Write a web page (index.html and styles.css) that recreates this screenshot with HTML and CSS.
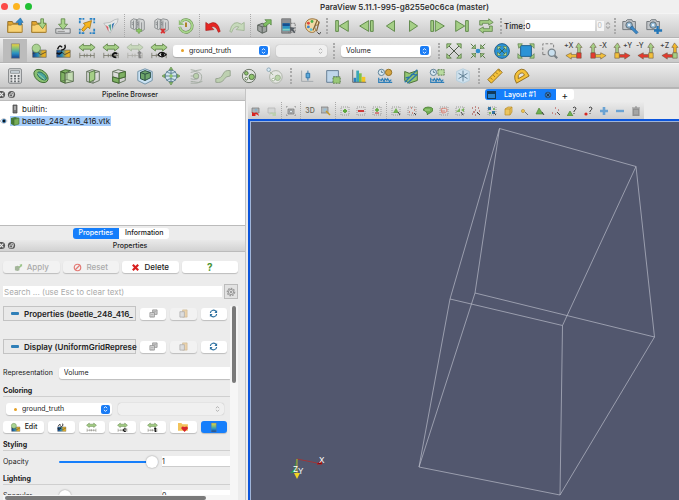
FILE: index.html
```html
<!DOCTYPE html>
<html lang="en">
<head>
<meta charset="utf-8">
<title>ParaView 5.11.1-995-g8255e0c6ca (master)</title>
<link rel="stylesheet" href="styles.css">
</head>
<body>
<svg class="sprite" aria-hidden="true">
  <defs>
    <linearGradient id="cmap" x1="0" y1="0" x2="0" y2="1"><stop offset="0" stop-color="#f0d23c"/><stop offset=".35" stop-color="#7fbf7b"/><stop offset=".65" stop-color="#2b93c4"/><stop offset="1" stop-color="#173f8f"/></linearGradient>
    <linearGradient id="cmaph" x1="0" y1="0" x2="1" y2="0"><stop offset="0" stop-color="#123f8c"/><stop offset=".4" stop-color="#2a8fb8"/><stop offset=".7" stop-color="#d9a92c"/><stop offset="1" stop-color="#f5b81d"/></linearGradient>
  </defs>
  <symbol id="folder" viewBox="0 0 20 20"><path d="M2 17V5h5l1 2h9v10z" fill="#e3a62e" stroke="#8a6a2a"/><path d="M2 17V9h4l1-1h11v9z" fill="#f8d273" stroke="#a37a2c"/></symbol>
  <symbol id="open" viewBox="0 0 20 20"><use href="#folder"/><path d="M14 9V6h-3l5-5 3 5h-2v3z" fill="#2f8ccc" stroke="#1c5d92" stroke-width=".6"/></symbol>
  <symbol id="recent" viewBox="0 0 20 20"><use href="#folder"/><path d="M12 2h3v5h3l-4 6-5-6h3z" fill="#a9d48a" stroke="#557d3d" stroke-width=".8"/></symbol>
  <symbol id="save" viewBox="0 0 20 20"><path d="M2 13h16v5H2z" fill="#d9dadb" stroke="#6d7173"/><path d="M8 2h4v6h3l-5 6-5-6h3z" fill="#a9d48a" stroke="#557d3d" stroke-width=".8"/><path d="M4 16h8" stroke="#888"/></symbol>
  <symbol id="catalyst" viewBox="0 0 20 20"><path d="M2 7V2h5M13 2h5v5M18 13v5h-5M7 18H2v-5" fill="none" stroke="#2c83c4" stroke-width="2" stroke-dasharray="3 1"/><path d="M4 14l4-5-2-2 9-3-2 9-2-2-5 5z" fill="#f6b51e" stroke="#9c6b12" stroke-width=".8"/></symbol>
  <symbol id="extract" viewBox="0 0 20 20"><path d="M2 7q8 0 12-4l4-1-1 4q-5 5-8 12q-3-6-7-11z" fill="#e5e7e7" stroke="#a6aaac" stroke-width=".7"/><path d="M4 9l3 2v5z" fill="#db5960"/><path d="M7 9l3-1v8z" fill="#59a58d"/><path d="M11 8l3-2-3 8z" fill="#3b78b0"/></symbol>
  <symbol id="server" viewBox="0 0 20 20"><path d="M2 4l3-2 4 1v9l-3 2-4-2zM8 4l3-2 5 1 1 2v9l-3 2-6-2z" fill="#d4d6d6" stroke="#74787a" stroke-width=".8"/><path d="M5 4v9M11 4v11M14 6v9M3 6l2 1M3 8l2 1M9 6l2 1M9 8l2 1" stroke="#74787a" stroke-width=".8"/></symbol>
  <symbol id="connect" viewBox="0 0 20 20"><use href="#server"/><path d="M8 14h2v-1h2v1h2v2h-2v2h-2v-2H8z" fill="#8ecb67" stroke="#618b48" stroke-width=".5"/></symbol>
  <symbol id="disconnect" viewBox="0 0 20 20"><use href="#server"/><path d="M9 13l4 5M13 13l-4 5" stroke="#d92d2d" stroke-width="2"/></symbol>
  <symbol id="history" viewBox="0 0 20 20"><path d="M5 5a7 7 0 1 1-2 6" fill="none" stroke="#668d4e" stroke-width="3"/><path d="M5 5a7 7 0 1 1-2 6" fill="none" stroke="#a8d58c" stroke-width="2"/><path d="M2 3v6h6z" fill="#91bf74"/><path d="M10 6v5" stroke="#ab7b14" stroke-width="2"/></symbol>
  <symbol id="undo" viewBox="0 0 20 20"><path d="M2 6l3 2q10-6 13 8l-2 1q-3-8-8-6l3 3-9 1z" fill="#e52522" stroke="#a41b19" stroke-width=".7"/></symbol>
  <symbol id="redo" viewBox="0 0 20 20"><path d="M18 6l-3 2Q5 2 2 16l2 1q3-8 8-6l-3 3 9 1z" fill="#c6d9bb" stroke="#96ad88" stroke-width=".8"/></symbol>
  <symbol id="cube-out" viewBox="0 0 20 20"><path d="M3 9l5-2 5 2v7l-5 2-5-3z" fill="#9fa3a1" stroke="#555c56"/><path d="M8 11v7M3 9l5 2 5-2" stroke="#555c56" fill="none"/><path d="M9 8l4-3-2-2h7v6l-2-2-5 4z" fill="#7fbf62" stroke="#477734" stroke-width=".7"/></symbol>
  <symbol id="select-color" viewBox="0 0 20 20"><path d="M3 2h10v16H3z" fill="#8d9094" stroke="#777"/><path d="M4 7h8v8H4z" fill="#2b93c4"/><path d="M4 7h8v3H4z" fill="#174f8f"/><path d="M4 13h8v2H4z" fill="#7fd0c0"/><path d="M13 7h5v10H9" fill="none" stroke="#777" stroke-dasharray="2 1"/><path d="M12 11l6 1-2 2 2 3-1 1-3-3-1 2z" fill="#555b61"/></symbol>
  <symbol id="palette" viewBox="0 0 20 20"><path d="M10 2c8 0 9 6 6 7-4 0-3 3-2 5 0 4-6 4-9 1C0 10 3 2 10 2z" fill="#f1d9a5" stroke="#92672c"/><circle cx="6" cy="7" r="1.6" fill="#e0463c"/><circle cx="10" cy="5" r="1.6" fill="#4cae4c"/><circle cx="6" cy="11" r="1.6" fill="#3a84ce"/><circle cx="9" cy="14" r="1.5" fill="#5ac0dd"/><path d="M16 3l-5 12M18 5l-3 11" stroke="#806238" stroke-width="1.3"/><path d="M16 17l2 2 2-2" fill="none" stroke="#222"/></symbol>
  <symbol id="first" viewBox="0 0 20 20"><path d="M3 4h3v12H3zM17 4v12L7 10z" class="vcr"/></symbol>
  <symbol id="prev" viewBox="0 0 20 20"><path d="M13 4v12L3 10zM15 4h3v12h-3z" class="vcr"/></symbol>
  <symbol id="reverse" viewBox="0 0 20 20"><path d="M15 4v12L6 10z" class="vcr"/></symbol>
  <symbol id="play" viewBox="0 0 20 20"><path d="M5 4v12l9-6z" class="vcr"/></symbol>
  <symbol id="next" viewBox="0 0 20 20"><path d="M2 4h3v12H2zM7 4v12l10-6z" class="vcr"/></symbol>
  <symbol id="last" viewBox="0 0 20 20"><path d="M14 4h3v12h-3zM3 4v12l10-6z" class="vcr"/></symbol>
  <symbol id="loop" viewBox="0 0 20 20"><path d="M3 9V4h10V2l5 4-5 3V7H6v2zM17 10v6H7v2l-5-4 5-3v2h7v-3z" fill="#a5cf86" stroke="#557a42" stroke-width=".8"/></symbol>
  <symbol id="camera" viewBox="0 0 20 20"><path d="M2 5h3l2-2h5l1 2h3v9H2z" fill="#c2c6ca" stroke="#6c7276"/><circle cx="9" cy="9" r="3.6" fill="#8fb5d2" stroke="#5e666b"/><circle cx="9" cy="9" r="1.4" fill="#e6f2fa"/></symbol>
  <symbol id="cam-edit" viewBox="0 0 20 20"><use href="#camera"/><path d="M11 11l2-1 1 2 5 5-2 2-5-5-2-1z" fill="#3a87c5" stroke="#1f578a" stroke-width=".6"/></symbol>
  <symbol id="cam-add" viewBox="0 0 20 20"><use href="#camera"/><path d="M14 10v9M10 15h9" stroke="#2376b7" stroke-width="2.6"/></symbol>

  <symbol id="legend" viewBox="0 0 20 20"><path d="M6 2h9v16H6z" fill="url(#cmap)" stroke="#777" stroke-width=".7"/></symbol>
  <symbol id="cmap-base" viewBox="0 0 20 20"><path d="M3 9h15v8H3z" fill="url(#cmaph)" stroke="#5b5b5b" stroke-width=".7"/><path d="M3 13l5-2 4 3 6-3" stroke="#333" fill="none" stroke-width=".8"/></symbol>
  <symbol id="edit-map" viewBox="0 0 20 20"><use href="#cmap-base"/><circle cx="7" cy="7" r="4.6" fill="#aad391" stroke="#638750" stroke-width=".8"/></symbol>
  <symbol id="sep-map" viewBox="0 0 20 20"><use href="#cmap-base"/><path d="M4 8q2-6 5-2M8 9q6-1 4-6M3 12q3 3 6-1" fill="none" stroke="#111" stroke-width="1.6"/></symbol>
  <symbol id="range" viewBox="0 0 20 20"><path d="M1 6l5-4v2h8V2l5 4-5 4V8H6v2z" fill="#a5cf86" stroke="#507439" stroke-width=".8"/><path d="M2 12v6M18 12v6M2 15h16M7 13v4M10 13v4M14 13v4" stroke="#77776a" fill="none" stroke-width=".9"/></symbol>
  <symbol id="range-c" viewBox="0 0 20 20"><use href="#range"/><path d="M17 13q-4-2-5 1t4 3" fill="none" stroke="#111" stroke-width="2"/></symbol>
  <symbol id="range-t" viewBox="0 0 20 20"><use href="#range"/><path d="M15 10v7h2M13 12h4" fill="none" stroke="#111" stroke-width="2"/></symbol>
  <symbol id="range-eye" viewBox="0 0 20 20"><use href="#range"/><path d="M9 14q4-5 9 0q-5 5-9 0z" fill="#fff" stroke="#111" stroke-width="1.2"/><circle cx="14" cy="14" r="2" fill="#111"/></symbol>
  <symbol id="reset-cam" viewBox="0 0 20 20"><path d="M4 4l12 12M16 4L4 16" stroke="#3f4b3a"/><path d="M2 2h5L2 7zM18 2v5l-5-5zM2 18v-5l5 5zM18 18h-5l5-5z" fill="#a5cf86" stroke="#50743e" stroke-width=".8"/></symbol>
  <symbol id="zoom-data" viewBox="0 0 20 20"><path d="M2 2l6 6M18 2l-6 6M2 18l6-6M18 18l-6-6" stroke="#50743e"/><path d="M7 7H3l4-4zM13 7V3l4 4zM7 13v4l-4-4zM13 13h4l-4 4z" fill="#a5cf86" stroke="#50743e" stroke-width=".8"/><circle cx="10" cy="10" r="2.600" fill="#2d8ecf"/></symbol>
  <symbol id="reset-closest" viewBox="0 0 20 20"><circle cx="10" cy="10" r="8.200" fill="#2b93d6" stroke="#1b5a87"/><path d="M6 6l8 8M14 6l-8 8" stroke="#33502a" stroke-width=".8"/><path d="M5 5h4L5 9zM15 5v4l-4-4zM5 15v-4l4 4zM15 15h-4l4-4z" fill="#b6dc9a" stroke="#50743e" stroke-width=".6"/></symbol>
  <symbol id="zoom-closest" viewBox="0 0 20 20"><path d="M4 4h12v12H4z" fill="#2b93d6" stroke="#1b5a87"/><path d="M1 2h5L2 7zM19 2v5l-5-5zM1 18v-5l5 5zM19 18h-5l5-5z" fill="#a5cf86" stroke="#50743e" stroke-width=".7"/></symbol>
  <symbol id="zoom-box" viewBox="0 0 20 20"><path d="M2 14V2h12v5M2 14h5" fill="none" stroke="#777" stroke-dasharray="3 2"/><circle cx="12" cy="12" r="4" fill="#c9dfee" stroke="#7b858b" stroke-width="1.4"/><path d="M15 15l3 3" stroke="#777f84" stroke-width="2.4"/></symbol>
  <symbol id="axis-r" viewBox="0 0 20 20"><path d="M14 12V6h-2l3-5 4 5h-2v6z" class="up"/><path d="M13 14H7v-2l-6 3 6 4v-2h6z" class="side"/><path d="M13 12h5v6h-5z" class="hub"/></symbol>
  <symbol id="axis-l" viewBox="0 0 20 20"><path d="M3 12V6H1l4-5 3 5H6v6z" class="up"/><path d="M7 14h6v-2l6 3-6 4v-2H7z" class="side"/><path d="M2 12h5v6H2z" class="hub"/></symbol>

  <symbol id="calc" viewBox="0 0 20 20"><rect x="3" y="2" width="14" height="16" rx="1" fill="#e8e9e9" stroke="#6d7174"/><path d="M5 4h10v3H5z" fill="#c9d3d8" stroke="#6d7174" stroke-width=".7"/><path d="M5 10h10M5 13h10M5 16h10" stroke="#62676a" stroke-width="2" stroke-dasharray="2 2"/></symbol>
  <symbol id="contour" viewBox="0 0 20 20"><ellipse cx="10" cy="10" rx="9" ry="6" transform="rotate(40 10 10)" fill="#8ac072" stroke="#3e6a34"/><ellipse cx="11" cy="10" rx="6" ry="3" transform="rotate(40 11 10)" fill="#4aa7a0" stroke="#2d6a5a"/><path d="M6 7l8 7" stroke="#b0df9d"/></symbol>
  <symbol id="clip" viewBox="0 0 20 20"><path d="M3 5l5 2v11l-5-2zM3 5l5-2 6 1-6 3z" fill="#7fb163" stroke="#3d632e"/><path d="M8 7l9-2v11l-9 2z" fill="#c3dcb2" stroke="#52664a"/><path d="M3 16l7-2 7 2M10 7v7" fill="none" stroke="#52664a" stroke-width=".7"/></symbol>
  <symbol id="slice" viewBox="0 0 20 20"><path d="M3 5l6-2 8 2v10l-7 3-7-2zM3 5l7 2 7-2M10 7v11" fill="none" stroke="#5d6d57"/><path d="M6 6l6-2v10l-6 3z" fill="#a5cf86" stroke="#4d713d"/></symbol>
  <symbol id="threshold" viewBox="0 0 20 20"><path d="M3 5l6-2 8 2v10l-7 3-7-2zM3 5l7 2 7-2M10 7v11M3 11l7 2 7-2" fill="none" stroke="#5d6d57"/><path d="M3 11l7 2v5l-7-2zM10 7l7-2v6l-7 2z" fill="#7fb163" stroke="#3d632e"/></symbol>
  <symbol id="subset" viewBox="0 0 20 20"><path d="M2 5l8-3 8 3v10l-8 4-8-4z" fill="#cbe3f4" stroke="#6b8da4"/><path d="M5 6l5-2 6 2v6l-6 3-5-2z" fill="#6da56a" stroke="#24463e"/><path d="M10 8v7M5 6l5 2 6-2" fill="none" stroke="#24463e"/></symbol>
  <symbol id="glyph" viewBox="0 0 20 20"><circle cx="10" cy="10" r="6.5" fill="#d2e5ef" stroke="#557a8f"/><path d="M10 1v18M1 10h18M5 5q5 4 10 0M5 15q5-4 10 0" fill="none" stroke="#557a8f"/><path d="M8 3h4l-2-3zM8 17h4l-2 3zM3 8v4l-3-2zM17 8v4l3-2z" fill="#8fc56d" stroke="#4f773a" stroke-width=".6"/><circle cx="10" cy="10" r="2" fill="#8fc56d"/></symbol>
  <symbol id="stream" viewBox="0 0 20 20"><path d="M3 3q5 2 12 0M3 6q5-2 9 0t3 7-5 4-7-1M3 10h3M3 13q6 2 9-1M3 18q7 1 13-2" fill="none" stroke="#a2aaa0"/><circle cx="9" cy="10" r="3" fill="#b9d0ab" stroke="#96a293"/></symbol>
  <symbol id="warp" viewBox="0 0 20 20"><path d="M2 13q6 0 8-5t8-4v6q-5 0-7 4t-9 3z" fill="#bdd0b0" stroke="#94a18c"/></symbol>
  <symbol id="group" viewBox="0 0 20 20"><circle cx="10" cy="10" r="7.4" fill="#e2e4e1" stroke="#606a5c"/><circle cx="7" cy="7" r="2" fill="#8fc56d" stroke="#506d41"/><circle cx="13" cy="11" r="3" fill="#8fc56d" stroke="#506d41"/><circle cx="7" cy="13" r="1.5" fill="#fff" stroke="#506d41"/></symbol>
  <symbol id="level" viewBox="0 0 20 20"><circle cx="11" cy="11" r="7" fill="#e5e7e3" stroke="#a8afa4"/><circle cx="13" cy="12" r="3" fill="#b9d4a8" stroke="#9aaf8d"/><circle cx="8" cy="14" r="1.5" fill="#fff" stroke="#9aaf8d"/><circle cx="3" cy="3" r="2" fill="#d8e9f3" stroke="#8ba7b8"/><path d="M4 5l4 4" stroke="#9aaf8d"/></symbol>
  <symbol id="box" viewBox="0 0 20 20"><path d="M4 4v12h13" fill="none" stroke="#a2a6aa"/><path d="M11 4v11" stroke="#2c73a7"/><path d="M9 7h4v5H9z" fill="#5ba9da" stroke="#2c73a7"/></symbol>
  <symbol id="select-block" viewBox="0 0 20 20"><path d="M3 4h13v7h-5v6H3z" fill="#bfd6ea" stroke="#5e7890"/><path d="M10 11h8v7h-8z" fill="#99c878" stroke="#547542" stroke-dasharray="2 1"/></symbol>
  <symbol id="hist" viewBox="0 0 20 20"><path d="M4 17v-5h3v5z" fill="#2b7fc0"/><path d="M7 17V4h3v13z" fill="#3aa7b7"/><path d="M10 17V7h3v10z" fill="#7fc04a"/><path d="M13 17v-6h4v6z" fill="#f4c522"/><path d="M3 3v14h15" fill="none" stroke="#666"/></symbol>
  <symbol id="plot-time" viewBox="0 0 20 20"><circle cx="6" cy="6" r="3.5" fill="#d9e9f2" stroke="#55788e"/><path d="M6 4v2h2" stroke="#55788e" fill="none"/><circle cx="14" cy="6" r="3.5" fill="#d6a541" stroke="#8f6b1e"/><path d="M3 12v5h15M4 14l2 1 1-2 2 3 1-3 2 2 1-2 2 3 2-2" fill="none" stroke="#2f7fb9" stroke-width="1.3"/></symbol>
  <symbol id="plot-line" viewBox="0 0 20 20"><path d="M3 5l5 2 9-3v11l-9 3-5-3z" fill="#94c772" stroke="#42692f"/><path d="M3 17L17 3M4 12l5-1 2-3 6 1M6 18l11-10" stroke="#2a76aa" stroke-width="1.4" fill="none"/></symbol>
  <symbol id="plot-sel" viewBox="0 0 20 20"><circle cx="6" cy="6" r="3.5" fill="#d9e9f2" stroke="#55788e"/><path d="M6 4v2h2" stroke="#55788e" fill="none"/><path d="M11 3h7v6h-7z" fill="#b9dba1" stroke="#547542" stroke-dasharray="2 1"/><path d="M3 12v5h15M4 14l2 1 1-2 2 3 1-3 2 2 1-2 2 3 2-2" fill="none" stroke="#2f7fb9" stroke-width="1.3"/></symbol>
  <symbol id="freeze" viewBox="0 0 20 20"><path d="M3 5l7-3 7 3v10l-7 3-7-3z" fill="#cfe2ef" stroke="#b3cddd"/><path d="M10 4v12M5 7l10 6M15 7L5 13" stroke="#5b7c90"/></symbol>
  <symbol id="ruler" viewBox="0 0 20 20"><path d="M2 14L14 2l4 4L6 18z" fill="#f4c13a" stroke="#8e6a17"/><path d="M5 12l2 2M8 9l2 2M11 6l2 2M14 3l1 2" stroke="#8e6a17"/></symbol>
  <symbol id="protractor" viewBox="0 0 20 20"><path d="M5 18Q0 9 7 4t12 6z" fill="#f4c13a" stroke="#8e6a17"/><path d="M7 13q-1-4 2-6t5 2z" fill="#e5e5e5" stroke="#8e6a17"/></symbol>

  <symbol id="close" viewBox="0 0 10 10"><circle cx="5" cy="5" r="4" fill="#555"/><path d="M3 3l4 4M7 3L3 7" stroke="#eee" stroke-width="1.2"/></symbol>
  <symbol id="float" viewBox="0 0 10 10"><circle cx="5" cy="5" r="4" fill="#555"/><path d="M3 4.500h3v3H3zM4.500 4V3H7v3H6" fill="none" stroke="#eee" stroke-width=".8"/></symbol>
  <symbol id="tab-close" viewBox="0 0 10 10"><circle cx="5" cy="5" r="3.600" fill="#3b78b6" stroke="#234a74"/><path d="M3 3l4 4M7 3L3 7" stroke="#1c3450" stroke-width="1.200"/></symbol>
  <symbol id="chev" viewBox="0 0 8 10"><path d="M2 4l2-2 2 2M2 6l2 2 2-2" fill="none" stroke="currentColor" stroke-width="1.1"/></symbol>
  <symbol id="host" viewBox="0 0 10 10"><path d="M3 1h4v8H3z" fill="#777" stroke="#444" stroke-width=".7"/><path d="M4 3h2M4 5h2" stroke="#ddd"/></symbol>
  <symbol id="eye" viewBox="0 0 10 10"><path d="M0 5q5-6 9 0q-4 6-9 0z" fill="#e9f2f8" stroke="#778"  stroke-width=".5"/><circle cx="5" cy="5" r="2.4" fill="#1f5f93"/><circle cx="5" cy="5" r="1.3" fill="#000"/></symbol>
  <symbol id="gcube" viewBox="0 0 10 10"><path d="M1 2l3 1.500v6L1 8zM1 2l4-1 4 1-5 1.500z" fill="#477a38"/><path d="M4 3.500L9 2v6L4 9.500z" fill="#78ad57" stroke="#3d6a30" stroke-width=".6"/></symbol>
  <symbol id="copy" viewBox="0 0 10 10"><path d="M4 1h5v5H4z" fill="#ccc" stroke="#888" stroke-width=".8"/><path d="M1 4h5v5H1z" fill="#ddd" stroke="#888" stroke-width=".8"/><path d="M2 6h3M5 3h3M2 8h3" stroke="#999" stroke-width=".7"/></symbol>
  <symbol id="paste" viewBox="0 0 10 10"><path d="M4 1h5v8H4z" fill="#ecd3ac" stroke="#cdb894" stroke-width=".7"/><path d="M1 3h5v6H1z" fill="#ddd" stroke="#aaa" stroke-width=".8"/></symbol>
  <symbol id="refresh" viewBox="0 0 10 10"><path d="M1.500 4.500A3.500 3.500 0 0 1 8 3M8.500 5.500A3.500 3.500 0 0 1 2 7" fill="none" stroke="#2b6f9f" stroke-width="1.3"/><path d="M9 1v3.500H6zM1 9V5.500h3z" fill="#2b6f9f"/></symbol>
  <symbol id="gear" viewBox="0 0 10 10"><circle cx="5" cy="5" r="3.600" fill="none" stroke="#999" stroke-width="1.4" stroke-dasharray="1.700 1"/><circle cx="5" cy="5" r="2.600" fill="#ddd" stroke="#999"/><circle cx="5" cy="5" r="1" fill="#888"/></symbol>
  <symbol id="apply" viewBox="0 0 10 10"><path d="M1 4l3-1 2 1v4L4 9 1 8z" fill="#a4b59b"/><path d="M5 4l2-1-1-1 3-1v3L8 4 6 6z" fill="#9cc48b"/></symbol>
  <symbol id="reset" viewBox="0 0 10 10"><circle cx="5" cy="5" r="3.600" fill="none" stroke="#e37873" stroke-width="1.3"/><path d="M7.500 2.500l-5 5" stroke="#e37873" stroke-width="1.3"/></symbol>
  <symbol id="delete" viewBox="0 0 10 10"><path d="M2 2l6 6M8 2L2 8" stroke="#d81f1f" stroke-width="2.400"/></symbol>
  <symbol id="fav" viewBox="0 0 10 10"><path d="M0 8V1h3l1 1h5v6z" fill="#f2c35b"/><path d="M6 9L3 6q0-3 3-1.500Q9 3 9 6z" fill="#d8262b"/></symbol>

  <symbol id="cam-undo" viewBox="0 0 10 10"><path d="M1 2h7v5H1z" fill="#b1b4b6" stroke="#777" stroke-width=".7"/><circle cx="5" cy="4" r="1.500" fill="#8fb0c4"/><path d="M1 6l2 1q4-2 5 3q-3-3-4-1l1 1H1z" fill="#d82420"/></symbol>
  <symbol id="cam-redo" viewBox="0 0 10 10"><path d="M1 2h7v5H1z" fill="#d4d6d6" stroke="#b2b2b2" stroke-width=".7"/><path d="M9 6L7 7Q3 5 2 9q3-2 4 0L5 10h4z" fill="#bcd0ae"/></symbol>
  <symbol id="capture" viewBox="0 0 10 10"><path d="M0 2V0h2M8 0h2v2M10 8v2H8M2 10H0V8" fill="none" stroke="#888" stroke-width=".8"/><path d="M2 3h6v5H2z" fill="#b4b7b9" stroke="#777" stroke-width=".7"/><circle cx="5" cy="5.500" r="1.500" fill="#dfe9ef" stroke="#666" stroke-width=".6"/></symbol>
  <symbol id="adjust" viewBox="0 0 10 10"><path d="M0 1h7v6H0z" fill="#b4b7b9" stroke="#777" stroke-width=".7"/><circle cx="4" cy="4" r="1.800" fill="#9fbfd3"/><path d="M5 5l4 4" stroke="#c69a28" stroke-width="1.400"/></symbol>
  <symbol id="dots" viewBox="0 0 10 10"><path d="M1 1h8v8H1z" fill="none" stroke="#8b8b8b" stroke-dasharray="1 1" stroke-width=".8"/></symbol>
  <symbol id="s-add" viewBox="0 0 10 10"><use href="#dots"/><path d="M5 3v4M3 5h4" stroke="#5ea83d" stroke-width="1.800"/></symbol>
  <symbol id="s-sub" viewBox="0 0 10 10"><use href="#dots"/><path d="M2 5h6" stroke="#cc2b2b" stroke-width="1.800"/></symbol>
  <symbol id="s-tog" viewBox="0 0 10 10"><use href="#dots"/><path d="M3 4h4M5 2v4" stroke="#5ea83d" stroke-width="1.500"/><path d="M3 7h4" stroke="#cc2b2b"/></symbol>
  <symbol id="s-tri" viewBox="0 0 10 10"><use href="#dots"/><path d="M5 2l3 5H2z" fill="#6fb04f"/><path d="M7 6l2 3" stroke="#444"/></symbol>
  <symbol id="s-pts" viewBox="0 0 10 10"><use href="#dots"/><path d="M4 2h1M7 4h1M2 6h1M5 7h1" stroke="#b8402f" stroke-width="1.200"/><path d="M7 7l2 2" stroke="#444"/></symbol>
  <symbol id="s-blob" viewBox="0 0 10 10"><path d="M0 4q1-3 5-3t5 2-3 4-3 2 0-2-4-3z" fill="#74b055" stroke="#41722c" stroke-width=".7"/><path d="M2 4h5" stroke="#a7d48d"/></symbol>
  <symbol id="s-ring" viewBox="0 0 10 10"><use href="#dots"/><path d="M2 3q6-2 6 1T3 7zM3 5h3" fill="none" stroke="#d98275" /></symbol>
  <symbol id="s-poly" viewBox="0 0 10 10"><use href="#dots"/><path d="M1 6l4-4v4zM6 4l3-2v4z" fill="#79b45a"/><path d="M6 6l2 3" stroke="#444"/></symbol>
  <symbol id="s-red" viewBox="0 0 10 10"><path d="M1 2h1M4 4h1M7 2h1M2 6h2M6 7h1M4 9h1M1 8h1M8 5h1M4 1h1" stroke="#a0322b" stroke-width="1.200"/><path d="M6 6l3 3" stroke="#444"/></symbol>
  <symbol id="s-blk" viewBox="0 0 10 10"><use href="#dots"/><path d="M1 1h3v3H1zM5 5h3v3H5z" fill="#3474a3"/><path d="M6 2h2v2H6zM2 6h2v2H2z" fill="#83b766"/><path d="M7 7l2 2" stroke="#444"/></symbol>
  <symbol id="s-frus" viewBox="0 0 10 10"><path d="M2 3l3-2h4v5L7 9H2z" fill="#ecc55f" stroke="#b98d2b" stroke-width=".7"/><path d="M2 3h5v6M7 3l2-2" fill="none" stroke="#b98d2b" stroke-width=".7"/></symbol>
  <symbol id="s-pick" viewBox="0 0 10 10"><circle cx="4" cy="5" r="1.600" fill="#efc553" stroke="#b28b2e" stroke-width=".6"/><path d="M6 6l3 3" stroke="#777"/></symbol>
  <symbol id="s-cell" viewBox="0 0 10 10"><path d="M4 2l4 6H1z" fill="#6fb04f" stroke="#467a30" stroke-width=".6"/><path d="M7 6l2 3" stroke="#444"/></symbol>
  <symbol id="s-pt3" viewBox="0 0 10 10"><path d="M4 2h1M1 7h1M4 8h1M7 4h1" stroke="#b33a34" stroke-width="1.200"/><path d="M6 6l3 3" stroke="#444"/></symbol>
  <symbol id="s-qcell" viewBox="0 0 10 10"><path d="M3 5l3 5H0z" fill="#6fb04f" stroke="#467a30" stroke-width=".6"/><path d="M6 2q1-2 3 0 0 2-2 3v1M7 7v1" fill="none" stroke="#444"/></symbol>
  <symbol id="s-qpt" viewBox="0 0 10 10"><circle cx="3" cy="8" r="1.600" fill="#d52a24"/><path d="M6 2q1-2 3 0 0 2-2 3v1M7 7v1" fill="none" stroke="#444"/></symbol>
  <symbol id="s-grow" viewBox="0 0 10 10"><path d="M5 1v8M1 5h8" stroke="#6ba3d3" stroke-width="2.600"/></symbol>
  <symbol id="s-shrink" viewBox="0 0 10 10"><path d="M1 5h8" stroke="#6ba3d3" stroke-width="2.400"/></symbol>
  <symbol id="s-trash" viewBox="0 0 10 10"><path d="M1 2h8M4 1h2M2 3h6v7H2z" fill="#999" stroke="#8a8a8a"/><path d="M4 4v4M6 4v4" stroke="#bbb" stroke-width=".7"/></symbol>
</svg>

<div class="app">
  <header class="titlebar">
    <div class="lights"><i class="red"></i><i class="amber"></i><i class="green"></i></div>
    <h1>ParaView 5.11.1-995-g8255e0c6ca (master)</h1>
  </header>

  <div class="toolbar" role="toolbar" aria-label="Main controls">
    <button class="tool" aria-label="Open"><svg><use href="#open"/></svg></button>
    <button class="tool" aria-label="Recent files"><svg><use href="#recent"/></svg></button>
    <button class="tool" aria-label="Save data"><svg><use href="#save"/></svg></button>
    <button class="tool" aria-label="Save state"><svg><use href="#catalyst"/></svg></button>
    <button class="tool" aria-label="Extracts"><svg><use href="#extract"/></svg></button>
    <span class="line"></span>
    <button class="tool" aria-label="Connect"><svg><use href="#connect"/></svg></button>
    <button class="tool" aria-label="Disconnect"><svg><use href="#disconnect"/></svg></button>
    <button class="tool" aria-label="Reset session"><svg><use href="#history"/></svg></button>
    <span class="line"></span>
    <button class="tool" aria-label="Undo"><svg><use href="#undo"/></svg></button>
    <button class="tool" aria-label="Redo" disabled><svg><use href="#redo"/></svg></button>
    <span class="line"></span>
    <button class="tool" aria-label="Auto apply"><svg><use href="#cube-out"/></svg></button>
    <button class="tool" aria-label="Find data"><svg><use href="#select-color"/></svg></button>
    <button class="tool" aria-label="Load palette"><svg><use href="#palette"/></svg></button>
    <span class="grip"></span>
    <button class="tool" aria-label="First frame"><svg><use href="#first"/></svg></button>
    <button class="tool" aria-label="Previous frame"><svg><use href="#prev"/></svg></button>
    <button class="tool" aria-label="Reverse"><svg><use href="#reverse"/></svg></button>
    <button class="tool" aria-label="Play"><svg><use href="#play"/></svg></button>
    <button class="tool" aria-label="Next frame"><svg><use href="#next"/></svg></button>
    <button class="tool" aria-label="Last frame"><svg><use href="#last"/></svg></button>
    <button class="tool" aria-label="Loop"><svg><use href="#loop"/></svg></button>
    <span class="grip"></span>
    <label class="time" for="time">Time:</label>
    <input class="time-value" id="time" type="text" value="0">
    <input class="time-step" type="text" value="0" aria-label="Time step" disabled>
    <span class="spin"><svg><use href="#chev"/></svg></span>
    <span class="grip"></span>
    <button class="tool" aria-label="Adjust camera"><svg><use href="#cam-edit"/></svg></button>
    <button class="tool" aria-label="Add camera link"><svg><use href="#cam-add"/></svg></button>
  </div>

  <div class="toolbar" role="toolbar" aria-label="Color and camera">
    <button class="tool pressed" aria-label="Color legend"><svg><use href="#legend"/></svg></button>
    <button class="tool" aria-label="Edit color map"><svg><use href="#edit-map"/></svg></button>
    <button class="tool" aria-label="Separate color map"><svg><use href="#sep-map"/></svg></button>
    <button class="tool" aria-label="Rescale to data range"><svg><use href="#range"/></svg></button>
    <button class="tool" aria-label="Rescale to custom range"><svg><use href="#range-c"/></svg></button>
    <button class="tool" aria-label="Rescale over time" disabled><svg class="faded"><use href="#range-t"/></svg></button>
    <button class="tool" aria-label="Rescale to visible range"><svg><use href="#range-eye"/></svg></button>
    <div class="combo array"><i class="dot"></i><select aria-label="Color array"><option>ground_truth</option></select><b><svg><use href="#chev"/></svg></b></div>
    <div class="combo component off"><select aria-label="Component" disabled><option></option></select><b><svg><use href="#chev"/></svg></b></div>
    <span class="grip wide"></span>
    <div class="combo repr"><select aria-label="Representation type"><option>Volume</option></select><b><svg><use href="#chev"/></svg></b></div>
    <span class="grip mid"></span>
    <button class="tool" aria-label="Reset camera"><svg><use href="#reset-cam"/></svg></button>
    <button class="tool" aria-label="Zoom to data"><svg><use href="#zoom-data"/></svg></button>
    <button class="tool" aria-label="Reset camera closest"><svg><use href="#reset-closest"/></svg></button>
    <button class="tool" aria-label="Zoom closest"><svg><use href="#zoom-closest"/></svg></button>
    <button class="tool" aria-label="Zoom to box"><svg><use href="#zoom-box"/></svg></button>
    <button class="tool axis x"><svg><use href="#axis-r"/></svg><span>+X</span></button>
    <button class="tool axis x flip"><svg><use href="#axis-l"/></svg><span>-X</span></button>
    <button class="tool axis y flip"><svg><use href="#axis-l"/></svg><span>+Y</span></button>
    <button class="tool axis y"><svg><use href="#axis-r"/></svg><span>-Y</span></button>
    <button class="tool axis z"><svg><use href="#axis-r"/></svg><span>+Z</span></button>
  </div>

  <div class="toolbar filters" role="toolbar" aria-label="Filters">
    <button class="tool" aria-label="Calculator"><svg><use href="#calc"/></svg></button>
    <button class="tool" aria-label="Contour"><svg><use href="#contour"/></svg></button>
    <button class="tool" aria-label="Clip"><svg><use href="#clip"/></svg></button>
    <button class="tool" aria-label="Slice"><svg><use href="#slice"/></svg></button>
    <button class="tool" aria-label="Threshold"><svg><use href="#threshold"/></svg></button>
    <button class="tool" aria-label="Extract subset"><svg><use href="#subset"/></svg></button>
    <button class="tool" aria-label="Glyph"><svg><use href="#glyph"/></svg></button>
    <button class="tool" aria-label="Stream tracer" disabled><svg><use href="#stream"/></svg></button>
    <button class="tool" aria-label="Warp" disabled><svg><use href="#warp"/></svg></button>
    <button class="tool" aria-label="Group"><svg><use href="#group"/></svg></button>
    <button class="tool" aria-label="Extract level" disabled><svg><use href="#level"/></svg></button>
    <span class="grip"></span>
    <button class="tool" aria-label="Box plot"><svg><use href="#box"/></svg></button>
    <button class="tool" aria-label="Extract selection"><svg><use href="#select-block"/></svg></button>
    <button class="tool" aria-label="Histogram"><svg><use href="#hist"/></svg></button>
    <button class="tool" aria-label="Plot data over time"><svg><use href="#plot-time"/></svg></button>
    <button class="tool" aria-label="Plot over line"><svg><use href="#plot-line"/></svg></button>
    <button class="tool" aria-label="Plot selection over time"><svg><use href="#plot-sel"/></svg></button>
    <button class="tool" aria-label="Freeze"><svg><use href="#freeze"/></svg></button>
    <span class="grip"></span>
    <button class="tool" aria-label="Ruler"><svg><use href="#ruler"/></svg></button>
    <button class="tool" aria-label="Protractor"><svg><use href="#protractor"/></svg></button>
  </div>

  <main class="workspace">
    <aside class="docks">
      <section class="browser">
        <div class="dock-title"><svg><use href="#close"/></svg><svg><use href="#float"/></svg><h2>Pipeline Browser</h2></div>
        <ul class="tree">
          <li><span class="eye"></span><svg><use href="#host"/></svg><span class="name">builtin:</span></li>
          <li class="selected"><svg class="eye"><use href="#eye"/></svg><div class="hit"><svg><use href="#gcube"/></svg><span class="name">beetle_248_416_416.vtk</span></div></li>
        </ul>
      </section>

      <nav class="tabs"><button class="on">Properties</button><button>Information</button></nav>

      <section class="props">
        <div class="dock-title"><svg><use href="#close"/></svg><svg><use href="#float"/></svg><h2>Properties</h2></div>
        <div class="actions">
          <button class="btn" disabled><svg><use href="#apply"/></svg>Apply</button>
          <button class="btn" disabled><svg><use href="#reset"/></svg>Reset</button>
          <button class="btn"><svg><use href="#delete"/></svg>Delete</button>
          <button class="btn help">?</button>
        </div>
        <div class="search">
          <input type="text" placeholder="Search ... (use Esc to clear text)" aria-label="Search properties">
          <button aria-label="Advanced properties"><svg><use href="#gear"/></svg></button>
        </div>
        <div class="scroll">
          <div class="form">
            <div class="group">
              <button class="fold"><i></i><span>Properties (beetle_248_416_</span></button>
              <button class="btn" aria-label="Copy properties"><svg><use href="#copy"/></svg></button>
              <button class="btn" aria-label="Paste properties" disabled><svg><use href="#paste"/></svg></button>
              <button class="btn" aria-label="Restore properties"><svg><use href="#refresh"/></svg></button>
            </div>
            <div class="group">
              <button class="fold"><i></i><span>Display (UniformGridReprese</span></button>
              <button class="btn" aria-label="Copy display"><svg><use href="#copy"/></svg></button>
              <button class="btn" aria-label="Paste display" disabled><svg><use href="#paste"/></svg></button>
              <button class="btn" aria-label="Restore display"><svg><use href="#refresh"/></svg></button>
            </div>
            <div class="row">
              <label for="representation">Representation</label>
              <div class="combo cut"><select id="representation"><option>Volume</option></select></div>
            </div>
            <h3>Coloring</h3>
            <div class="color-row">
              <div class="combo"><i class="dot"></i><select aria-label="Coloring array"><option>ground_truth</option></select><b><svg><use href="#chev"/></svg></b></div>
              <div class="combo off"><select aria-label="Coloring component" disabled><option></option></select><b><svg><use href="#chev"/></svg></b></div>
            </div>
            <div class="map-row">
              <button class="btn edit"><svg><use href="#edit-map"/></svg>Edit</button>
              <button class="btn" aria-label="Separate map"><svg><use href="#sep-map"/></svg></button>
              <button class="btn" aria-label="Rescale"><svg><use href="#range"/></svg></button>
              <button class="btn" aria-label="Rescale custom"><svg><use href="#range-c"/></svg></button>
              <button class="btn" aria-label="Rescale time"><svg><use href="#range-t"/></svg></button>
              <button class="btn" aria-label="Choose preset"><svg><use href="#fav"/></svg></button>
              <button class="btn lit" aria-label="Show legend"><svg><use href="#legend"/></svg></button>
            </div>
            <h3>Styling</h3>
            <div class="slide">
              <label for="opacity">Opacity</label>
              <input id="opacity" type="range" class="full" min="0" max="100" value="100">
              <input type="text" value="1" aria-label="Opacity value">
            </div>
            <h3>Lighting</h3>
            <div class="slide">
              <label for="specular">Specular</label>
              <input id="specular" type="range" min="0" max="100" value="0">
              <input type="text" value="0" aria-label="Specular value">
            </div>
          </div>
          <div class="vbar"><i></i></div>
        </div>
        <div class="hbar"><i></i></div>
      </section>
    </aside>

    <section class="layout">
      <nav class="layout-tabs">
        <button class="current"><i></i><span>Layout #1</span><svg><use href="#tab-close"/></svg></button>
        <button class="plus" aria-label="Add layout">+</button>
      </nav>
      <div class="viewbar" role="toolbar" aria-label="View">
        <button aria-label="Camera undo"><svg><use href="#cam-undo"/></svg></button>
        <button aria-label="Camera redo"><svg><use href="#cam-redo"/></svg></button>
        <span class="line"></span>
        <button aria-label="Capture"><svg><use href="#capture"/></svg></button>
        <span class="line"></span>
        <button>3D</button>
        <button aria-label="Adjust"><svg><use href="#adjust"/></svg></button>
        <span class="line"></span>
        <button aria-label="Add selection"><svg><use href="#s-add"/></svg></button>
        <button aria-label="Subtract selection"><svg><use href="#s-sub"/></svg></button>
        <button aria-label="Toggle selection"><svg><use href="#s-tog"/></svg></button>
        <span class="line"></span>
        <button aria-label="Select cells on"><svg><use href="#s-tri"/></svg></button>
        <button aria-label="Select points on"><svg><use href="#s-pts"/></svg></button>
        <button aria-label="Select cells through"><svg><use href="#s-blob"/></svg></button>
        <button aria-label="Select points through"><svg><use href="#s-ring"/></svg></button>
        <button aria-label="Select cells polygon"><svg><use href="#s-poly"/></svg></button>
        <button aria-label="Select points polygon"><svg><use href="#s-red"/></svg></button>
        <button aria-label="Select block"><svg><use href="#s-blk"/></svg></button>
        <button aria-label="Select frustum"><svg><use href="#s-frus"/></svg></button>
        <button aria-label="Pick"><svg><use href="#s-pick"/></svg></button>
        <button aria-label="Interactive cells"><svg><use href="#s-cell"/></svg></button>
        <button aria-label="Interactive points"><svg><use href="#s-pt3"/></svg></button>
        <button aria-label="Hover cells"><svg><use href="#s-qcell"/></svg></button>
        <button aria-label="Hover points"><svg><use href="#s-qpt"/></svg></button>
        <button aria-label="Grow selection"><svg><use href="#s-grow"/></svg></button>
        <button aria-label="Shrink selection"><svg><use href="#s-shrink"/></svg></button>
        <button aria-label="Clear selection"><svg><use href="#s-trash"/></svg></button>
      </div>
      <div class="view">
        <svg viewBox="250 121 429 379" preserveAspectRatio="xMinYMin meet" role="img" aria-label="Volume outline">
          <g fill="none" stroke="#b9bcc8" stroke-width=".7">
            <path d="M499.500 128.500L636 166.500L654.500 337L475 293z"/>
            <path d="M450 299L562.500 325.500L560 495L419 467z"/>
            <path d="M499.500 128.500L450 299M636 166.500L562.500 325.500M654.500 337L560 495M475 293L419 467"/>
          </g>
          <path d="M297 459l20 4" stroke="#b02c2c" stroke-width=".8"/><path d="M317 464l4-3 1 3z" fill="#300" stroke="#c01818"/>
          <path d="M297 459l-3 12" stroke="#2c9b41" stroke-width=".8"/><path d="M290 473l5-4 1 3z" fill="#18b340"/>
          <path d="M297 459v14" stroke="#d5c02c" stroke-width=".8"/><path d="M294 473h6l-3 6z" fill="#f1d422"/>
          <g class="axes"><text x="319" y="463">X</text><text x="293" y="472">Z</text><text x="298" y="474">Y</text></g>
        </svg>
      </div>
    </section>
  </main>
</div>
</body>
</html>
```
FILE: styles.css
```css
* { box-sizing: border-box; }

body {
  margin: 0;
  font: 7px/10px Inter, "Liberation Sans", sans-serif;
  color: #222;
  background: #ececec;
}

button, input, select { font: inherit; color: inherit; margin: 0; padding: 0; border: 0; background: none; min-width: 0; }
select { appearance: none; opacity: 1; }
h1, h2, h3, ul { margin: 0; padding: 0; font-size: inherit; }
svg { display: block; flex: none; }
.sprite { position: absolute; width: 0; height: 0; }

.app { display: flex; flex-direction: column; height: 100vh; min-height: 480px; overflow: hidden; }

.titlebar { display: grid; grid-template-columns: 1fr auto 1fr; align-items: center; height: 13px; flex: none; background: #f0f0f0; }
.titlebar h1 { grid-column: 2; font-size: 8px; font-weight: 600; color: #333; padding-left: 130px; white-space: nowrap; }
.lights { display: flex; gap: 5px; padding-left: 1px; }
.lights i { width: 7px; height: 7px; border-radius: 50%; }
.red { background: #fc4b48; }
.amber { background: #fdb41e; }
.green { background: #1fc033; }

.toolbar { display: flex; align-items: center; height: 25px; flex: none; padding-left: 3px; overflow: hidden; background: linear-gradient(#ebebeb, #c9c9c9); border-bottom: 1px solid #b4b4b4; border-top: 1px solid #f4f4f4; }
.tool { width: 24px; height: 23px; flex: none; display: grid; place-items: center; }
.tool svg { width: 18px; height: 18px; }
.filters { padding-left: 2px; }
.filters .tool { width: 26px; }
.pressed { background: #bcbcbc; }
.faded { opacity: .4; }
.line { width: 1px; margin: 0 1px; align-self: stretch; flex: none; border-left: 1px dotted #aaa; }
.grip { width: 2px; height: 16px; margin: 0 2px; flex: none; border-left: 2px dotted #aaa; }
.grip.wide { margin: 0 6px; }
.grip.mid { margin: 0 2px 0 7px; }
.vcr { fill: #a5cf86; stroke: #5a8445; stroke-width: 1; }
.time { font-size: 8px; font-weight: 500; }
.time-value { width: 70px; height: 11px; margin-right: 2px; background: #fff; font-size: 8px; }
.time-step { width: 7px; height: 10px; background: #f6f6f6; color: #bbb; }
.spin { color: #aaa; }
.spin svg { width: 8px; height: 11px; }

.axis { position: relative; }
.axis span { position: absolute; left: 2px; top: 3px; font-weight: 500; color: #444; line-height: 8px; }
.axis.flip span { left: 13px; }
.x { --up: #a5cf86; --side: #f3c03b; --hub: #e63a2e; }
.y { --up: #a5cf86; --side: #e63a2e; --hub: #f3c03b; }
.z { --up: #f3b82b; --side: #e63a2e; --hub: #a5cf86; }
.up, .side, .hub { stroke: #66523a; stroke-width: .6; }
.up { fill: var(--up); }
.side { fill: var(--side); }
.hub { fill: var(--hub); }

.combo { display: flex; align-items: center; height: 12px; padding: 0 2px 0 5px; background: #fff; border-radius: 3px; box-shadow: 0 1px 1px #0003; }
.combo select { flex: 1; height: 12px; }
.combo b { width: 9px; height: 9px; border-radius: 2px; background: #1a7cf5; color: #fff; display: grid; place-items: center; }
.combo b svg { width: 7px; height: 8px; }
.combo.off { background: #f0f0f0; box-shadow: 0 0 1px #0005; }
.combo.off b { background: none; color: #aaa; }
.combo .dot { width: 3px; height: 3px; margin: 0 5px 0 3px; border-radius: 50%; background: #e5a026; }
.toolbar .combo { flex: none; }
.array { width: 97px; margin: 0 6px 0 2px; }
.component { width: 51px; }
.repr { width: 90px; }

.workspace { flex: 1; min-height: 0; display: grid; grid-template-columns: 246px 1fr; border-top: 1px solid #b7b7b7; }

.docks { display: flex; flex-direction: column; min-height: 0; border-right: 1px solid #c4c4c4; }
.dock-title { display: flex; align-items: center; height: 12px; gap: 1px; flex: none; margin-left: -3px; background: linear-gradient(#e9e9e9, #d2d2d2); border-bottom: 1px solid #bbb; }
.dock-title svg { width: 9px; height: 9px; }
.dock-title h2 { flex: 1; text-align: center; font-weight: 500; padding-right: 2px; }
.browser { height: 137px; flex: none; background: #fff; border-bottom: 1px solid #bbb; }
.tree { list-style: none; padding-top: 2px; font-size: 8px; }
.tree li { display: flex; align-items: center; height: 12px; gap: 2px; }
.tree svg { width: 10px; height: 10px; }
.tree .eye { width: 8px; }
.hit { display: flex; gap: 2px; align-items: center; height: 10px; padding-right: 1px; background: #a5cdfb; }

.tabs { display: flex; justify-content: center; height: 14px; flex: none; align-items: center; padding-right: 3px; }
.tabs button { height: 11px; padding: 0 6px; font-weight: 500; background: #fff; border-radius: 0 3px 3px 0; }
.tabs .on { color: #fff; background: #157efb; border-radius: 3px 0 0 3px; }

.props { flex: 1; min-height: 0; display: flex; flex-direction: column; }
.btn { height: 12px; border-radius: 3px; background: #fff; box-shadow: 0 1px 1px #0003; display: flex; align-items: center; justify-content: center; gap: 4px; font-weight: 500; }
.btn:disabled { background: #f2f2f2; color: #aaa; }
.btn svg { width: 9px; height: 9px; }
.actions { display: grid; grid-template-columns: repeat(4, 1fr); gap: 3px; padding: 9px 7px 0 3px; font-size: 8px; }
.help { color: #4b9334; font-weight: 700; font-size: 10px; }
.search { display: flex; align-items: center; gap: 2px; padding: 11px 7px 0 3px; }
.search input { flex: 1; height: 11px; background: #fff; padding-left: 1px; font-size: 8px; }
.search input::placeholder { color: #aaa; }
.search button { width: 14px; height: 15px; border: 1px solid #bbb; background: #e2e2e2; display: grid; place-items: center; }
.search button svg { width: 10px; height: 10px; }

.scroll { flex: 1; min-height: 0; display: grid; grid-template-columns: 1fr 8px; margin: 7px 7px 0 3px; overflow: hidden; }
.form { min-width: 0; overflow: hidden; }
.vbar { background: #f6f6f6; }
.vbar i { display: block; width: 4px; height: 77px; margin-left: 2px; border-radius: 2px; background: #7a7a7a; }
.hbar { height: 5px; flex: none; margin: 0 7px 0 3px; padding: 1px 2px 0; background: #f6f6f6; }
.hbar i { display: block; width: 87%; height: 4px; border-radius: 2px; background: #7a7a7a; }

.group { display: grid; grid-template-columns: 133px repeat(3, 1fr); gap: 4px; align-items: center; padding-right: 3px; height: 15px; margin-bottom: 18px; }
.fold { display: flex; align-items: center; height: 15px; padding: 0 0 0 7px; gap: 5px; border: 1px solid #c3c3c3; background: #e9e9e9; }
.fold i { width: 8px; height: 3px; flex: none; border-radius: 1px; background: #2f7fb8; }
.fold span { flex: 1; white-space: nowrap; text-align: left; font-weight: 600; font-size: 8px; }
.row { display: flex; align-items: center; gap: 6px; margin-top: -5px; }
.cut { flex: 1; border-radius: 3px 0 0 3px; }
h3 { font-weight: 700; height: 11px; margin-top: 7px; border-bottom: 1px solid #cfcfcf; }
.color-row { display: grid; grid-template-columns: 1fr 1fr; gap: 6px; padding: 0 6px 0 3px; margin-top: 6px; }
.map-row { display: grid; grid-template-columns: 41px repeat(6, 1fr); gap: 4px; padding-right: 3px; margin-top: 6px; }
.map-row .btn svg { width: 11px; height: 11px; }
.map-row .lit { background: #157efb; }
.slide { display: grid; grid-template-columns: 52px 99px 1fr; align-items: center; gap: 4px; height: 17px; margin-top: 2px; }
.slide + h3 { margin-top: 4px; }
.slide input[type="text"] { height: 11px; background: #fff; border-bottom: 1px solid #ccc; }
input[type="range"] { appearance: none; width: 100%; height: 12px; }
input[type="range"]::-webkit-slider-runnable-track { height: 2px; border-radius: 1px; background: #d0d0d0; }
input[type="range"].full::-webkit-slider-runnable-track { background: #157efb; }
input[type="range"]::-webkit-slider-thumb { appearance: none; width: 12px; height: 12px; margin-top: -5px; border-radius: 50%; background: #fff; box-shadow: 0 0 2px #0006; }

.layout { display: flex; flex-direction: column; min-width: 0; min-height: 0; padding-left: 2px; background: #ececec; }
.layout-tabs { display: flex; justify-content: center; height: 13px; flex: none; padding-left: 132px; }
.layout-tabs button { height: 11px; background: #fff; }
.layout-tabs .current { display: flex; align-items: center; gap: 8px; padding: 0 4px 0 2px; color: #fff; background: #157efb; border-radius: 3px 0 0 3px; font-weight: 500; }
.current i { width: 9px; height: 8px; background: #2784d3; border: 1px solid #123a5c; border-top-width: 3px; }
.current svg { width: 8px; height: 8px; }
.layout-tabs .plus { width: 18px; border-radius: 0 3px 3px 0; font-size: 10px; }
.viewbar { display: flex; align-items: center; align-self: flex-start; height: 17px; flex: none; background: linear-gradient(#ebebeb, #cdcdcd); }
.viewbar button { width: 16px; height: 16px; flex: none; display: grid; place-items: center; color: #665; font-weight: 500; }
.viewbar svg { width: 10px; height: 10px; }
.view { flex: 1; min-height: 0; background: #52576e; border: 2px solid #0b55dc; border-right: 0; border-bottom: 0; box-shadow: inset 1px 1px #9fb4d8; overflow: hidden; }
.view svg { width: 100%; height: 100%; }
.axes { font: 8px Inter, sans-serif; fill: #fff; }
```
